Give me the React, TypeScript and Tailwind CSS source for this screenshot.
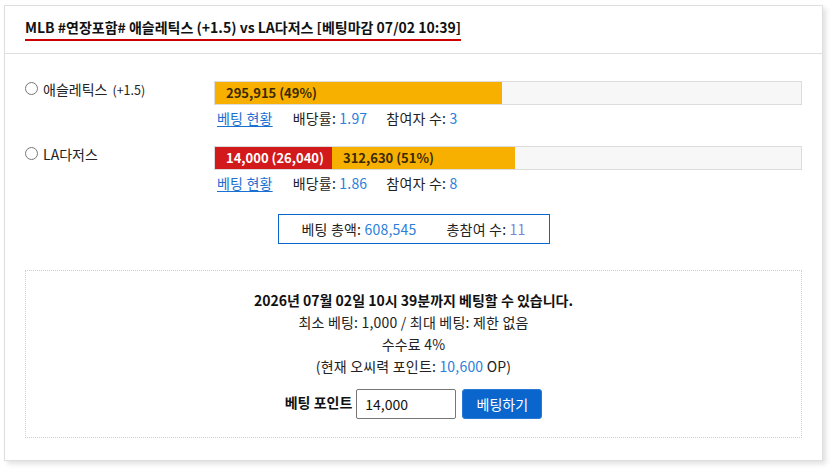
import * as React from "react"

const font = { fontFamily: '"Noto Sans CJK KR", "Noto Sans", sans-serif' }

interface TeamRowProps {
  name: string
  handicap?: string
  odds: string
  players: string
  children: React.ReactNode
  last?: boolean
}

function TeamRow({ name, handicap, odds, players, children, last }: TeamRowProps) {
  return (
    <div className={`flex ${last ? "" : "mb-[18px]"}`}>
      <label className="w-[189px] flex items-start gap-[5px] pt-[1px] leading-[14px]">
        <input type="radio" name="team" className="m-0 w-[13px] h-[13px]" />
        <span className="text-[14px] text-[#222]">
          {name}
          {handicap && <span className="text-[12.5px] ml-[5px]">{handicap}</span>}
        </span>
      </label>
      <div className="flex-1">
        <div className="h-[24px] flex bg-[#f7f7f7] border border-[#dcdcdc]">{children}</div>
        <div className="mt-[3px] h-[20px] flex items-center text-[14px] tracking-[0.2px] text-[#222] leading-[20px]">
          <a className="ml-[3px] text-[#1a6fd1] underline underline-offset-2 cursor-pointer">베팅 현황</a>
          <span className="ml-[20px]">
            배당률: <span className="text-[#2a80db]">{odds}</span>
          </span>
          <span className="ml-[19px]">
            참여자 수: <span className="text-[#2a80db]">{players}</span>
          </span>
        </div>
      </div>
    </div>
  )
}

export default function App() {
  return (
    <div className="bg-white w-[835px] h-[474px] pl-[4px] pt-[5px]" style={font}>
      <div className="w-[819px] h-[456px] bg-white border border-[#dedede] shadow-[3px_3px_5px_rgba(0,0,0,0.12)]">
        <div className="h-[48px] px-[20px] border-b border-[#dedede] flex items-end">
          <span className="text-[14px] font-bold text-[#111] leading-[18px] pb-[3px] mb-[12px] border-b-2 border-[#cc0000]">
            MLB #연장포함# 애슬레틱스 (+1.5) vs LA다저스 [베팅마감 07/02 10:39]
          </span>
        </div>

        <div className="px-[20px] pt-[27px]">
          <TeamRow name="애슬레틱스" handicap="(+1.5)" odds="1.97" players="3">
            <div className="w-[49%] bg-[#f8b000] flex items-center pl-[11px] text-[13px] font-bold text-[#3a2a00]">
              295,915 (49%)
            </div>
          </TeamRow>
          <TeamRow name="LA다저스" odds="1.86" players="8" last>
            <div className="w-[117px] bg-[#d2191c] flex items-center pl-[11px] text-[13px] font-bold text-white">
              14,000 (26,040)
            </div>
            <div className="w-[183px] bg-[#f8b000] flex items-center pl-[11px] text-[13px] font-bold text-[#3a2a00]">
              312,630 (51%)
            </div>
          </TeamRow>

          <div className="flex justify-center mt-[21px]">
            <div className="w-[272px] h-[30px] border border-[#0a66cc] flex items-center justify-center gap-[30px] text-[14px] tracking-[0.2px] text-[#222]">
              <span>
                베팅 총액: <span className="text-[#2a80db]">608,545</span>
              </span>
              <span>
                총참여 수: <span className="text-[#7a86d8]">11</span>
              </span>
            </div>
          </div>

          <div className="mt-[26px] h-[168px] border border-dotted border-[#cfcfcf] flex flex-col items-center pt-[18px] text-[14px] tracking-[0.2px] text-[#222] leading-[22px]">
            <div className="font-bold text-[#111] tracking-normal">2026년 07월 02일 10시 39분까지 베팅할 수 있습니다.</div>
            <div>최소 베팅: 1,000 / 최대 베팅: 제한 없음</div>
            <div>수수료 4%</div>
            <div>
              (현재 오씨력 포인트: <span className="text-[#2a80db]">10,600</span> OP)
            </div>
            <div className="mt-[12px] flex items-start gap-[4px] tracking-normal">
              <span className="font-bold text-[14px] text-[#111] leading-[26px]">베팅 포인트</span>
              <input
                defaultValue="14,000"
                className="w-[100px] h-[30px] border border-[#767676] rounded-[2px] px-[8px] text-[14px] text-[#111] outline-none"
                style={font}
              />
              <button className="ml-[2px] w-[80px] h-[30px] bg-[#0a66cc] rounded-[3px] text-white text-[14px] border border-[#2a7ad6]">
                베팅하기
              </button>
            </div>
          </div>
        </div>
      </div>
    </div>
  )
}
